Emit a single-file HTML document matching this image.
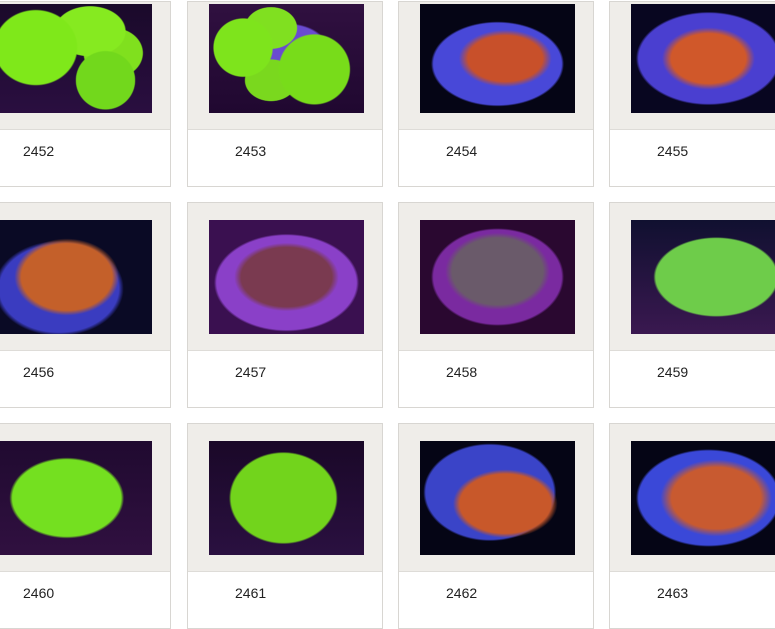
<!DOCTYPE html>
<html><head><style>
body{margin:0;width:775px;height:610px;overflow:hidden;background:#fff;position:relative;font-family:"Liberation Sans",sans-serif}
.c{position:absolute;width:196px;border:1px solid #d8d6d2;background:#fff;box-sizing:border-box}
.g{position:absolute;left:0;right:0;top:0;background:#efede9;border-bottom:1px solid #dedcd8}
.im{position:absolute;left:21px;width:155px;height:115px;background:#1a0828}
.t{position:absolute;left:47px;font-size:14px;color:#222}
</style></head><body>
<div id="r"></div>
<script>
const imgs=[
"radial-gradient(ellipse 35% 45% at 25% 40%,#7fe81a 75%,transparent 78%),radial-gradient(ellipse 25% 35% at 70% 70%,#72d81c 75%,transparent 78%),radial-gradient(ellipse 30% 30% at 60% 25%,#86ea20 75%,transparent 78%),radial-gradient(ellipse 25% 30% at 75% 45%,#80e01e 75%,transparent 78%),linear-gradient(#1a0a2a,#2a0e40)",
"radial-gradient(ellipse 25% 35% at 22% 40%,#7ee41c 75%,transparent 78%),radial-gradient(ellipse 30% 42% at 68% 60%,#78dc1a 75%,transparent 78%),radial-gradient(ellipse 22% 25% at 40% 22%,#80e020 75%,transparent 78%),radial-gradient(ellipse 22% 25% at 40% 70%,#7ad81e 75%,transparent 78%),radial-gradient(ellipse 35% 30% at 50% 40%,#6a4bd0 70%,transparent 75%),linear-gradient(#301040,#200830)",
"radial-gradient(ellipse 40% 35% at 55% 50%,#c8502a 60%,transparent 75%),radial-gradient(ellipse 55% 50% at 50% 55%,#4848d8 75%,transparent 78%),#050515",
"radial-gradient(ellipse 40% 38% at 50% 50%,#d0582a 60%,transparent 75%),radial-gradient(ellipse 60% 55% at 50% 50%,#4a3fd0 75%,transparent 78%),#080620",
"radial-gradient(ellipse 45% 45% at 45% 50%,#c4602a 65%,transparent 75%),radial-gradient(ellipse 55% 55% at 40% 60%,#3a3cc0 70%,transparent 76%),#0a0a25",
"radial-gradient(ellipse 45% 40% at 50% 50%,#7a3a50 65%,transparent 75%),radial-gradient(ellipse 60% 55% at 50% 55%,#8a40c8 75%,transparent 78%),#3a1050",
"radial-gradient(ellipse 45% 45% at 50% 45%,#6a5a6a 65%,transparent 75%),radial-gradient(ellipse 55% 55% at 50% 50%,#7a2aa0 75%,transparent 78%),#2a0830",
"radial-gradient(ellipse 52% 45% at 55% 50%,#6ecc4a 75%,transparent 78%),linear-gradient(#101030,#3a1850)",
"radial-gradient(ellipse 50% 48% at 45% 50%,#74e020 70%,transparent 74%),linear-gradient(#200a30,#301040)",
"radial-gradient(ellipse 45% 52% at 48% 50%,#72d41c 75%,transparent 78%),linear-gradient(#1a0828,#2a1040)",
"radial-gradient(ellipse 45% 40% at 55% 55%,#c8582a 65%,transparent 75%),radial-gradient(ellipse 55% 55% at 45% 45%,#3a44c8 75%,transparent 78%),#050515",
"radial-gradient(ellipse 48% 45% at 55% 50%,#c85a30 60%,transparent 75%),radial-gradient(ellipse 60% 55% at 50% 50%,#3a48d8 75%,transparent 78%),#050515"];
const rows=[[1,3,128,187],[202,219,349,408],[423,440,570,629]];
const cols=[-25,187,398,609];
let h='',n=2452,k=0;
for(const [top,iy,gb,lb] of rows)for(const x of cols){
h+=`<div class="c" style="left:${x}px;top:${top}px;height:${lb-top}px"><div class="g" style="height:${gb-top}px"></div><div class="im" style="top:${iy-top}px;height:${Math.min(115,gb-iy-16)}px;background:${imgs[k]}"></div><div class="t" style="top:${gb-top+14}px">${n}</div></div>`;n++;k++;}
document.getElementById('r').innerHTML=h;
</script>
</body></html>
